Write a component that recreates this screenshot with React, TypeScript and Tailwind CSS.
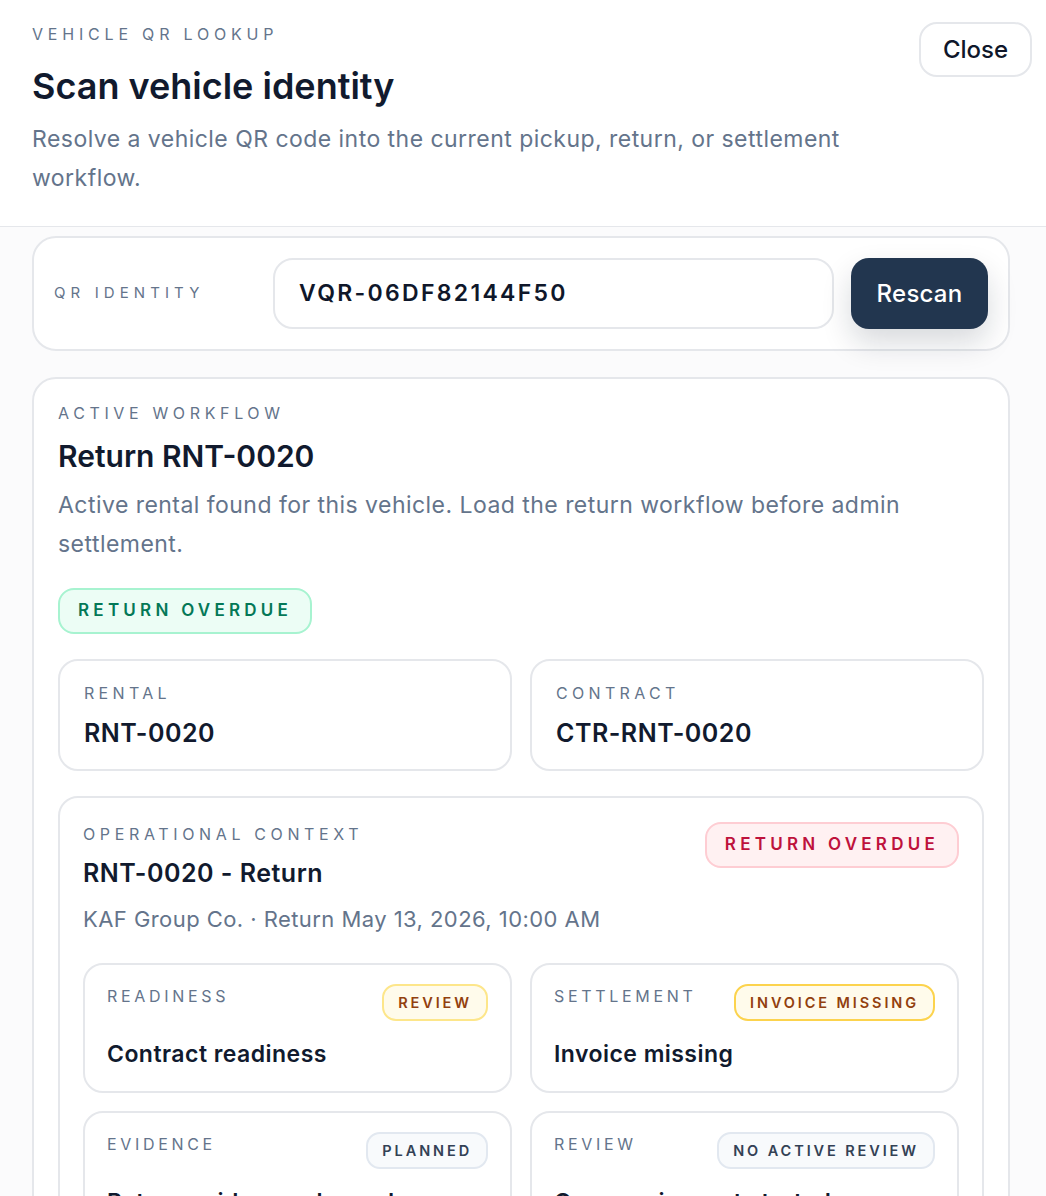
// Vehicle QR lookup panel
type Tone = 'green' | 'red' | 'amber' | 'amberStrong' | 'slate';

const toneClasses: Record<Tone, string> = {
  green: 'bg-[#ecfdf5] border-[#a7f3d0] text-[#047857]',
  red: 'bg-[#fff1f2] border-[#fecdd3] text-[#be123c]',
  amber: 'bg-[#fffbeb] border-[#fde68a] text-[#92400e]',
  amberStrong: 'bg-[#fffbeb] border-[#fcd34d] text-[#92400e]',
  slate: 'bg-[#f8fafc] border-[#e2e8f0] text-[#334155]',
};

function Badge({ label, tone }: { label: string; tone: Tone }) {
  return (
    <span
      className={`inline-flex h-[46px] items-center rounded-[16px] border-2 px-[18px] text-[17px] font-semibold uppercase tracking-[0.25em] ${toneClasses[tone]}`}
    >
      {label}
    </span>
  );
}

function SmallBadge({ label, tone }: { label: string; tone: Tone }) {
  return (
    <span
      className={`inline-flex h-[37px] shrink-0 items-center rounded-[14px] border-2 px-[14px] text-[14.5px] font-semibold uppercase tracking-[0.2em] ${toneClasses[tone]}`}
    >
      {label}
    </span>
  );
}

interface StatusItem {
  label: string;
  badge: string;
  tone: Tone;
  title: string;
}

const statusItems: StatusItem[] = [
  { label: 'Readiness', badge: 'Review', tone: 'amber', title: 'Contract readiness' },
  { label: 'Settlement', badge: 'Invoice missing', tone: 'amberStrong', title: 'Invoice missing' },
  { label: 'Evidence', badge: 'Planned', tone: 'slate', title: 'Return evidence planned' },
  { label: 'Review', badge: 'No active review', tone: 'slate', title: 'Open review not started' },
];

export default function App() {
  return (
    <div className="min-h-screen bg-white font-['Inter','Noto_Sans',sans-serif] text-[#0f172a]">
      {/* Header */}
      <header className="flex items-start justify-between border-b border-[#e5e7eb] pb-[28px] pl-8 pr-[14px] pt-[22px]">
        <div>
          <p className="text-[16px] leading-6 uppercase tracking-[0.3em] text-[#64748b]">Vehicle QR lookup</p>
          <h2 className="mt-[18px] text-[36px] font-semibold leading-[44px] text-[#111a2e]">
            Scan vehicle identity
          </h2>
          <p className="mt-[12px] max-w-[860px] text-[23px] leading-[39px] tracking-[0.02em] text-[#64748b]">
            Resolve a vehicle QR code into the current pickup, return, or settlement workflow.
          </p>
        </div>
        <button className="h-[55px] w-[113px] rounded-[18px] border-2 border-[#e5e7eb] bg-white text-[24px] font-medium text-[#0f172a]">
          Close
        </button>
      </header>

      {/* Body */}
      <main className="bg-[#fbfbfc] pb-10 pl-8 pr-[36px] pt-[9px]">
        {/* QR identity */}
        <section className="flex items-center rounded-[24px] border-2 border-[#e5e7eb] bg-white p-[20px]">
          <span className="w-[219px] shrink-0 text-[15px] uppercase tracking-[0.34em] text-[#64748b]">QR identity</span>
          <div className="flex h-[71px] flex-1 items-center rounded-[20px] border-2 border-[#e5e7eb] bg-white px-[24px]">
            <span className="text-[23px] font-semibold tracking-[0.1em] text-[#0f172a]">VQR-06DF82144F50</span>
          </div>
          <button className="ml-[17px] h-[71px] w-[137px] rounded-[18px] bg-[#22364f] text-[24px] font-medium tracking-[0.01em] text-white shadow-[0_14px_30px_rgba(15,23,42,0.16)]">
            Rescan
          </button>
        </section>

        {/* Active workflow */}
        <section className="mt-[26px] rounded-[24px] border-2 border-[#e5e7eb] bg-white px-[24px] pb-8 pt-[22px]">
          <p className="text-[16px] leading-6 uppercase tracking-[0.29em] text-[#64748b]">Active workflow</p>
          <h3 className="mt-[11px] text-[30px] font-semibold leading-[40px] text-[#111a2e]">Return RNT-0020</h3>
          <p className="mt-[10px] max-w-[900px] text-[23px] leading-[39px] tracking-[0.02em] text-[#64748b]">
            Active rental found for this vehicle. Load the return workflow before admin settlement.
          </p>
          <div className="mt-[24px]">
            <Badge label="Return overdue" tone="green" />
          </div>

          <div className="mt-[25px] grid grid-cols-2 gap-[18px]">
            {[
              ['Rental', 'RNT-0020'],
              ['Contract', 'CTR-RNT-0020'],
            ].map(([label, value]) => (
              <div key={label} className="rounded-[20px] border-2 border-[#e5e7eb] bg-white px-[24px] pb-[20px] pt-[20px]">
                <p className="text-[16px] leading-6 uppercase tracking-[0.27em] text-[#64748b]">{label}</p>
                <p className="mt-[12px] text-[25px] font-semibold leading-[32px] tracking-[0.02em] text-[#111a2e]">{value}</p>
              </div>
            ))}
          </div>

          {/* Operational context */}
          <div className="mt-[25px] rounded-[20px] border-2 border-[#e5e7eb] bg-white px-[23px] pb-8 pt-[24px]">
            <div className="flex items-start justify-between">
              <div>
                <p className="text-[16px] leading-6 uppercase tracking-[0.29em] text-[#64748b]">Operational context</p>
                <p className="mt-[11px] text-[25px] font-semibold leading-[32px] tracking-[0.02em] text-[#111a2e]">RNT-0020 - Return</p>
              </div>
              <Badge label="Return overdue" tone="red" />
            </div>
            <p className="mt-[15px] text-[22px] leading-[30px] tracking-[0.02em] text-[#64748b]">
              KAF Group Co. · Return May 13, 2026, 10:00 AM
            </p>

            <div className="mt-[29px] grid grid-cols-2 gap-[18px]">
              {statusItems.map((item) => (
                <div key={item.label} className="rounded-[20px] border-2 border-[#e5e7eb] bg-white px-[22px] pb-[22px] pt-[19px]">
                  <div className="flex items-start justify-between gap-3">
                    <p className="text-[16px] leading-6 uppercase tracking-[0.23em] text-[#64748b]">{item.label}</p>
                    <SmallBadge label={item.badge} tone={item.tone} />
                  </div>
                  <p className="mt-[18px] text-[23px] font-semibold leading-[30px] tracking-[0.02em] text-[#111a2e]">{item.title}</p>
                </div>
              ))}
            </div>
          </div>
        </section>
      </main>
    </div>
  );
}
